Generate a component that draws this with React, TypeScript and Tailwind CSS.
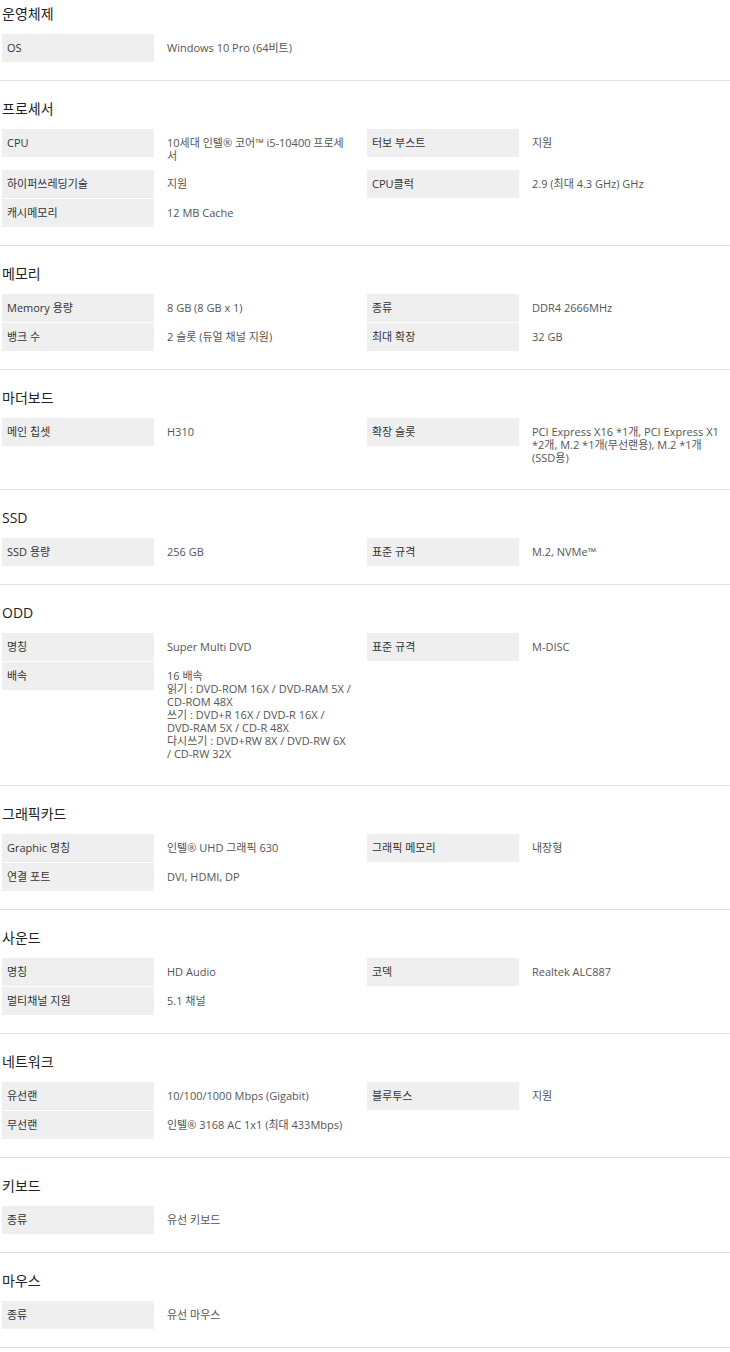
type Item = { label: string; value: string[] };
type Section = { title: string; items: Item[] };

const sections: Section[] = [
  {
    title: "운영체제",
    items: [{ label: "OS", value: ["Windows 10 Pro (64비트)"] }],
  },
  {
    title: "프로세서",
    items: [
      { label: "CPU", value: ["10세대 인텔® 코어™ i5-10400 프로세", "서"] },
      { label: "터보 부스트", value: ["지원"] },
      { label: "하이퍼쓰레딩기술", value: ["지원"] },
      { label: "CPU클럭", value: ["2.9 (최대 4.3 GHz) GHz"] },
      { label: "캐시메모리", value: ["12 MB Cache"] },
    ],
  },
  {
    title: "메모리",
    items: [
      { label: "Memory 용량", value: ["8 GB (8 GB x 1)"] },
      { label: "종류", value: ["DDR4 2666MHz"] },
      { label: "뱅크 수", value: ["2 슬롯 (듀얼 채널 지원)"] },
      { label: "최대 확장", value: ["32 GB"] },
    ],
  },
  {
    title: "마더보드",
    items: [
      { label: "메인 칩셋", value: ["H310"] },
      {
        label: "확장 슬롯",
        value: [
          "PCI Express X16 *1개, PCI Express X1",
          "*2개, M.2 *1개(무선랜용), M.2 *1개",
          "(SSD용)",
        ],
      },
    ],
  },
  {
    title: "SSD",
    items: [
      { label: "SSD 용량", value: ["256 GB"] },
      { label: "표준 규격", value: ["M.2, NVMe™"] },
    ],
  },
  {
    title: "ODD",
    items: [
      { label: "명칭", value: ["Super Multi DVD"] },
      { label: "표준 규격", value: ["M-DISC"] },
      {
        label: "배속",
        value: [
          "16 배속",
          "읽기 : DVD-ROM 16X / DVD-RAM 5X /",
          "CD-ROM 48X",
          "쓰기 : DVD+R 16X / DVD-R 16X /",
          "DVD-RAM 5X / CD-R 48X",
          "다시쓰기 : DVD+RW 8X / DVD-RW 6X",
          "/ CD-RW 32X",
        ],
      },
    ],
  },
  {
    title: "그래픽카드",
    items: [
      { label: "Graphic 명칭", value: ["인텔® UHD 그래픽 630"] },
      { label: "그래픽 메모리", value: ["내장형"] },
      { label: "연결 포트", value: ["DVI, HDMI, DP"] },
    ],
  },
  {
    title: "사운드",
    items: [
      { label: "명칭", value: ["HD Audio"] },
      { label: "코덱", value: ["Realtek ALC887"] },
      { label: "멀티채널 지원", value: ["5.1 채널"] },
    ],
  },
  {
    title: "네트워크",
    items: [
      { label: "유선랜", value: ["10/100/1000 Mbps (Gigabit)"] },
      { label: "블루투스", value: ["지원"] },
      { label: "무선랜", value: ["인텔® 3168 AC 1x1 (최대 433Mbps)"] },
    ],
  },
  {
    title: "키보드",
    items: [{ label: "종류", value: ["유선 키보드"] }],
  },
  {
    title: "마우스",
    items: [{ label: "종류", value: ["유선 마우스"] }],
  },
];

function SpecItem({ item }: { item: Item }) {
  return (
    <div className="flex items-start">
      <div className="ml-[2px] h-[28px] w-[152px] shrink-0 bg-[#efefef] pl-[5px] pt-[7px] text-[11px] leading-[14px] text-[#333]">
        {item.label}
      </div>
      <div className="pl-[13px] pt-[7px] pb-[7px] text-[11px] leading-[13px] text-[#555] whitespace-nowrap">
        {item.value.map((line, i) => (
          <div key={i}>{line}</div>
        ))}
      </div>
    </div>
  );
}

export default function App() {
  return (
    <div className="w-[730px] bg-white font-['Open_Sans','Noto_Sans_CJK_KR',sans-serif]">
      {sections.map((section, idx) => (
        <section
          key={section.title}
          className={`border-b border-[#e2e2e2] pb-[18px] ${idx === 0 ? "pt-[4px]" : "pt-[18px]"}`}
        >
          <h2 className="mb-[10px] pl-[2px] text-[14px] leading-[20px] text-[#222]">
            {section.title}
          </h2>
          <div className="grid grid-cols-2 gap-y-px">
            {section.items.map((item) => (
              <SpecItem key={item.label + item.value[0]} item={item} />
            ))}
          </div>
        </section>
      ))}
    </div>
  );
}
